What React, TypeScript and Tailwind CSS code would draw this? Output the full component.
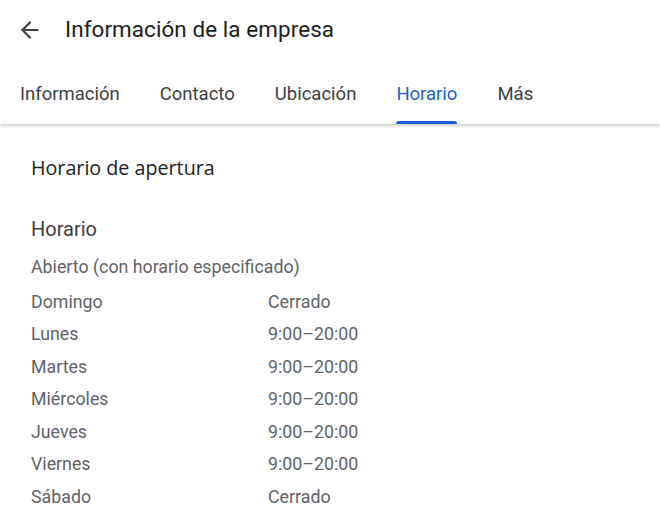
import { ArrowLeft } from 'lucide-react';

const tabs = ['Información', 'Contacto', 'Ubicación', 'Horario', 'Más'];

const hours = [
  ['Domingo', 'Cerrado'],
  ['Lunes', '9:00–20:00'],
  ['Martes', '9:00–20:00'],
  ['Miércoles', '9:00–20:00'],
  ['Jueves', '9:00–20:00'],
  ['Viernes', '9:00–20:00'],
  ['Sábado', 'Cerrado'],
];

export default function App() {
  return (
    <div className="w-[660px] h-[526px] overflow-hidden bg-white font-['Roboto',sans-serif]">
      <header className="relative bg-white shadow-[0_2px_3px_rgba(60,64,67,0.25)] z-10">
        <div className="flex items-center h-[60px] pl-[17px]">
          <ArrowLeft size={26} strokeWidth={2} className="text-[#3c4043]" />
          <h1 className="ml-[22px] text-[22.4px] text-[#202124] tracking-[0.1px]">Información de la empresa</h1>
        </div>
        <nav className="flex h-[64px] pl-[20px] gap-[40px]">
          {tabs.map((tab) => {
            const active = tab === 'Horario';
            return (
              <div key={tab} className="relative flex items-center pt-[6px]">
                <span className={active ? 'text-[18.5px] text-[#1a5fd0]' : 'text-[18.5px] text-[#3c4043]'}>{tab}</span>
                {active && <span className="absolute bottom-0 left-0 right-0 h-[3px] rounded-t-[3px] bg-[#1a5fd0]" />}
              </div>
            );
          })}
        </nav>
      </header>

      <main className="px-[31px] pt-[32px]">
        <h2 className="text-[19.7px] leading-[24px] font-medium text-[#202124] font-['Open_Sans',sans-serif]">Horario de apertura</h2>
        <h3 className="mt-[37px] text-[20px] leading-[24px] text-[#3c4043]">Horario</h3>
        <p className="mt-[14px] text-[17.8px] leading-[24px] text-[#5f6368]">Abierto (con horario especificado)</p>
        <div className="mt-[7px]">
          {hours.map(([day, time]) => (
            <div key={day} className="flex h-[32.5px] items-center text-[17.8px] text-[#5f6368]">
              <span className="w-[237px]">{day}</span>
              <span>{time}</span>
            </div>
          ))}
        </div>
      </main>
    </div>
  );
}
